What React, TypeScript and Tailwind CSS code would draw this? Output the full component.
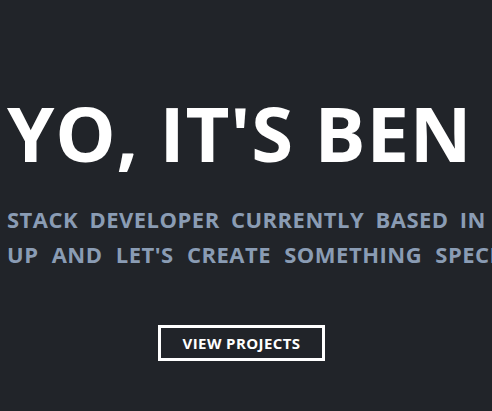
export default function App() {
  return (
    <div
      className="h-[411px] w-[492px] overflow-hidden bg-[#212429] text-white"
      style={{ fontFamily: '"Open Sans", "Noto Sans", sans-serif' }}
    >
      <section className="flex flex-col pt-[95px]">
        <h1 className="pl-[7px] text-[76px] font-bold leading-none tracking-[0.8px] whitespace-nowrap">
          YO, IT'S BEN
        </h1>
        <div className="mt-[31px] pl-[7px] text-[22px] font-bold leading-[35px] tracking-[0.5px] [word-spacing:5px] text-[#8a9cb4] whitespace-nowrap">
          <p>STACK DEVELOPER CURRENTLY BASED IN</p>
          <p className="[word-spacing:7px]">UP AND LET'S CREATE SOMETHING SPECIAL</p>
        </div>
        <div className="mt-[53px] flex justify-center pr-[9px]">
          <button className="h-[36px] w-[167px] border-[3px] border-white text-[15px] font-bold tracking-[0.4px] text-white">
            VIEW PROJECTS
          </button>
        </div>
      </section>
    </div>
  );
}
